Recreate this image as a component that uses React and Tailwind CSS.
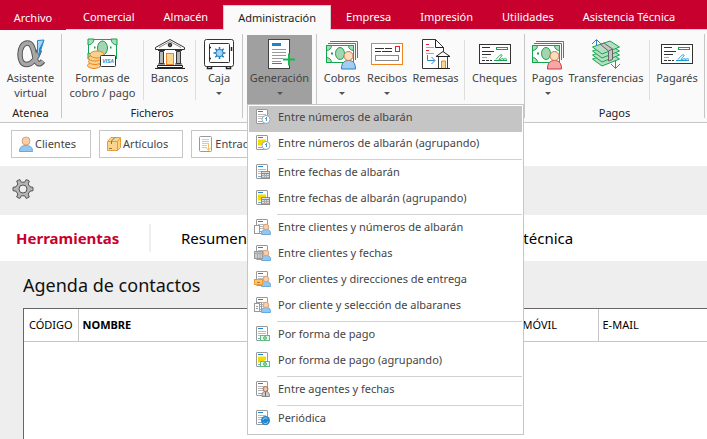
import { useState } from "react";

const tabs = [
  "Comercial",
  "Almacén",
  "Administración",
  "Empresa",
  "Impresión",
  "Utilidades",
  "Asistencia Técnica",
];

const menuGroups = [
  [
    { label: "Entre números de albarán", badge: "clock" },
    { label: "Entre números de albarán (agrupando)", badge: "clock", grouped: true },
  ],
  [
    { label: "Entre fechas de albarán", badge: "calendar" },
    { label: "Entre fechas de albarán (agrupando)", badge: "calendar", grouped: true },
  ],
  [
    { label: "Entre clientes y números de albarán", badge: "client", extra: "page" },
    { label: "Entre clientes y fechas", badge: "client", extra: "calendar" },
    { label: "Por clientes y direcciones de entrega", badge: "client", extra: "address" },
    { label: "Por cliente y selección de albaranes", badge: "client", extra: "pages" },
  ],
  [
    { label: "Por forma de pago", badge: "money" },
    { label: "Por forma de pago (agrupando)", badge: "money", grouped: true },
  ],
  [{ label: "Entre agentes y fechas", badge: "agent" }],
  [{ label: "Periódica", badge: "period" }],
];

function Icon({ children }) {
  return (
    <svg viewBox="0 0 32 32" className="h-8 w-8 shrink-0" fill="none" aria-hidden="true">
      {children}
    </svg>
  );
}

function AlphaIcon() {
  const d = "M24.500 12C22 20 17 26.500 11.500 26.500C7 26.500 5 22 5 16.500C5 10 8 5 12.500 5C18 5 18.500 13 20 19.500C21.500 26 24 28 28 23";
  return (
    <Icon>
      <path d={d} stroke="#555" strokeWidth="5.500" />
      <path d={d} stroke="#a6a6a6" strokeWidth="3.500" />
      <path d="M22.500 2.500L29 2L24 17.500L22.500 14Z" fill="#a9d3f2" stroke="#1b86cf" />
      <path d="M28.500 2.500L24 17L24 11Z" fill="#1b86cf" />
    </Icon>
  );
}

function PaymentIcon() {
  return (
    <Icon>
      <rect x="1.500" y="1.500" width="28" height="19" fill="#fff" stroke="#14a44d" />
      <path d="M1 1h6a6 6 0 0 1-6 6zM30 1h-6a6 6 0 0 0 6 6zM1 21v-6a6 6 0 0 1 6 6z" fill="#a9dcb8" stroke="#14a44d" />
      <ellipse cx="15.500" cy="10" rx="5" ry="7" fill="#a4d4b0" stroke="#14a44d" />
      <path d="M7 9.500h1.500M23 9.500h1.500" stroke="#14a44d" strokeWidth="2" />
      <g fill="#f8d28c" stroke="#ec8424">
        <ellipse cx="7" cy="27.500" rx="6.500" ry="3" />
        <ellipse cx="8" cy="23.500" rx="6.500" ry="3" />
        <ellipse cx="8" cy="20" rx="6.500" ry="3" />
        <ellipse cx="10" cy="16.500" rx="7" ry="3.500" />
      </g>
      <rect x="13.500" y="17.500" width="15" height="11" rx="1" fill="#fff" stroke="#333" />
      <text x="21" y="25" textAnchor="middle" fontSize="5" fontWeight="700" fontStyle="italic" fill="#1b86cf" className="font-['Liberation_Sans',sans-serif]">VISA</text>
    </Icon>
  );
}

function BankIcon() {
  return (
    <Icon>
      <rect x="6" y="11" width="20" height="16" fill="#fff" />
      <path d="M1.500 9.500L16 1.500L30.500 9.500V11.500H1.500Z" fill="#fff" stroke="#333" />
      <path d="M5 9.500L16 3.500L27 9.500" stroke="#888" />
      <circle cx="16" cy="7" r="1.800" fill="#555" stroke="#222" />
      <g fill="#b5b5b5" stroke="#333">
        <path d="M5.500 13.500h4v12h-4zM22.500 13.500h4v12h-4z" />
        <path d="M4 12.500h7M21 12.500h7M4 26h7M21 26h7" />
      </g>
      <rect x="12.500" y="15.500" width="7" height="11" fill="#f9d792" stroke="#ec8424" />
      <path d="M3.500 27.500h25v2h-25zM1 30.500h30" fill="#fff" stroke="#222" />
    </Icon>
  );
}

function SafeIcon() {
  return (
    <Icon>
      <rect x="1.500" y="1.500" width="29" height="27" rx="2" fill="#fff" stroke="#333" />
      <rect x="6.500" y="5.500" width="20" height="19" rx="1" stroke="#333" />
      <path d="M6 9.500h2M6 20.500h2M4.500 28.500v2h4v-2M23.500 28.500v2h4v-2M28.500 9v4" stroke="#222" strokeWidth="1.500" />
      <path d="M16.500 9v12M10.500 15h12M12.300 10.800l8.400 8.400M20.700 10.800l-8.400 8.400" stroke="#1b78ba" strokeWidth="1.500" />
      <circle cx="16.500" cy="15" r="3.700" fill="#9fd3f5" stroke="#1b78ba" />
    </Icon>
  );
}

function GenerateIcon() {
  return (
    <Icon>
      <rect x="4.500" y="1.500" width="21" height="29" fill="#fff" stroke="#444" />
      <path d="M8 6.500h9" stroke="#1b86c4" strokeWidth="3" />
      <path d="M8 11.500h14M8 14.500h14M8 17.500h14M8 20.500h11M8 23.500h9" stroke="#999" />
      <path d="M8 25.500h10" stroke="#1b86c4" />
      <path d="M25 15.500v12M19 21.500h12" stroke="#14b84e" strokeWidth="2" />
    </Icon>
  );
}

function BillsIcon({ person }) {
  const red = person === "red";
  return (
    <Icon>
      <path d="M4 3.500h27.500V20M2 5.500h27.500V22" stroke="#14a44d" />
      <rect x="0.500" y="7.500" width="27" height="17" fill="#fff" stroke="#14a44d" />
      <path d="M0.500 7.500h5a5 5 0 0 1-5 5zM27.500 7.500h-5a5 5 0 0 0 5 5zM0.500 24.500v-5a5 5 0 0 1 5 5z" fill="#a9dcb8" stroke="#14a44d" />
      <ellipse cx="14" cy="15.500" rx="4.500" ry="6" fill="#a4d4b0" stroke="#14a44d" />
      <path d="M5 15.500h2" stroke="#14a44d" strokeWidth="2" />
      <path
        d="M15.500 31C15.500 25 18 22.500 22.500 22.500C27 22.500 29.500 25 29.500 31Z"
        fill={red ? "#f5a8a8" : "#a3cdf0"}
        stroke={red ? "#d9303a" : "#2b7fc0"}
      />
      <circle cx="22.500" cy="18" r="4.500" fill="#fbdcbc" stroke="#c57a4a" />
    </Icon>
  );
}

function ReceiptIcon() {
  return (
    <Icon>
      <rect x="0.500" y="5.500" width="31" height="21" fill="#fff" stroke="#ec8424" />
      <path d="M4 10.500h9M14 10.500h7M4 13.500h6M11 13.500h10" stroke="#333" />
      <rect x="24.500" y="8.500" width="4" height="5" stroke="#e5202e" />
      <rect x="4.500" y="17.500" width="23" height="5" stroke="#888" />
    </Icon>
  );
}

function RemittanceIcon() {
  return (
    <Icon>
      <path d="M18 30.500H2.500V1.500H15.500L23.500 9.500V14" fill="#fff" stroke="#333" />
      <path d="M15.500 1.500V9.500H23.500" stroke="#222" />
      <path d="M6 6.500h3M6 12.500h3" stroke="#e5202e" />
      <path d="M6 9.500h8M6 15.500h8" stroke="#aaa" />
      <path d="M7.500 17v5.500h7M11.500 19l3.500 3.500l-3.500 3.500" stroke="#2a86cc" />
      <path d="M16 18.500L23 13.500L30 18.500Z" fill="#fff" stroke="#222" />
      <path d="M18.500 19v11.500h9V19" fill="#fff" stroke="#444" />
      <path d="M21.500 30v-7h4v7" fill="#f9d792" stroke="#ec8424" />
      <path d="M16 30.500h14" stroke="#222" />
    </Icon>
  );
}

function ChequeIcon({ blue }) {
  const ink = blue ? "#1b9ad8" : "#14a44d";
  return (
    <Icon>
      <rect x="0.500" y="6.500" width="31" height="19" fill="#fff" stroke="#333" />
      <path d="M3 9.500h8M3 13.500h12M3 16.500h9M3 22.500h3M7 22.500h3M11 22.500h2" stroke="#333" />
      <path d="M3 19.500h5" stroke="#aaa" />
      <rect x="17.500" y="9.500" width="11" height="2" stroke="#14a44d" />
      <path d="M15 22.500h13M17 21.500c3-4 6-6 6-4c0 1-5 5-2 4c2-.500 3-2 3 0c2-1 3-1 4 0" stroke={ink} />
    </Icon>
  );
}

function TransferIcon() {
  return (
    <Icon>
      <path d="M6.500 13V2M2 6l4.500-4.500L11 6M25.500 19v11M21 26l4.500 4.500L30 26" stroke="#2a86cc" />
      {[15, 11, 7, 3].map((y) => (
        <path
          key={y}
          d={`M2.500 ${y + 6}L20 ${y}L29.500 ${y + 6}L12 ${y + 13}Z`}
          fill="#b4dfc1"
          stroke="#14a44d"
        />
      ))}
      <path d="M10.500 6.500L14 5L22.500 11V21.500L18.500 23V13Z" fill="#c4c4c4" stroke="#666" />
      <path d="M18.500 13L22.500 11" stroke="#666" />
    </Icon>
  );
}

function MenuIcon({ badge, grouped, extra }) {
  return (
    <svg viewBox="0 0 18 16" className="h-4 w-[18px] shrink-0" fill="none" aria-hidden="true">
      <rect x="2.500" y="0.500" width="11" height="14" rx="0.500" fill="#fff" stroke="#999" />
      <path d="M4 2.500h5" stroke="#2a86cc" />
      <path
        d="M4 5.500h8M4 7.500h8M4 9.500h6"
        stroke={grouped ? "#f2dc00" : "#bbb"}
        strokeWidth={grouped ? 2 : 1}
      />
      <path d="M4 12.500h4" stroke="#74aeda" />
      {badge === "clock" && (
        <>
          <circle cx="12" cy="10.500" r="4" fill="#fff" stroke="#9aa8b3" />
          <path d="M12.500 8v4M11 9.500h1.500" stroke="#4d9ad0" />
        </>
      )}
      {badge === "calendar" && (
        <>
          <rect x="7.500" y="7.500" width="8" height="7" fill="#ddd" stroke="#8c8c8c" />
          <path d="M8 9.500h7" stroke="#8c8c8c" />
          <path d="M8 11.500h7M8 13.500h7M10.500 10v4M12.500 10v4" stroke="#aaa" />
        </>
      )}
      {badge === "client" && (
        <>
          <path d="M7.500 15.500c0-4 1-5 4.500-5s4.500 1 4.500 5z" fill="#94c6ee" stroke="#6aa9da" />
          <circle cx="12" cy="8" r="2.800" fill="#f8cfaa" stroke="#d9a27a" />
        </>
      )}
      {(extra === "page" || extra === "pages") && (
        <rect x="0.500" y="6.500" width="5" height="8" fill="#fff" stroke="#999" />
      )}
      {extra === "pages" && <path d="M2.500 5.500h5v8M2 9.500h2M2 11.500h2" stroke="#999" />}
      {extra === "calendar" && (
        <>
          <rect x="0.500" y="6.500" width="8" height="7" fill="#ccc" stroke="#999" />
          <path d="M1 8.500h7M3.500 7v6M6 7v6" stroke="#aaa" />
        </>
      )}
      {extra === "address" && (
        <>
          <rect x="0.500" y="8.500" width="8" height="5" fill="#f9c66c" stroke="#ec9a3a" />
          <path d="M3 11.500h3" stroke="#b9742c" />
        </>
      )}
      {badge === "money" && (
        <>
          <rect x="6.500" y="9.500" width="9" height="5" fill="#e6f7eb" stroke="#5fbd80" />
          <circle cx="11" cy="12" r="1.500" fill="#9dd3ae" stroke="#5fbd80" />
        </>
      )}
      {badge === "agent" && (
        <>
          <path d="M8 15.500c0-4 1-5 3.500-5s4 1 4 5z" fill="#ccc" stroke="#888" />
          <path d="M11.500 11v4" stroke="#dc3a3a" />
          <circle cx="11.500" cy="8" r="2.500" fill="#f4c3a0" stroke="#b06a4c" />
        </>
      )}
      {badge === "period" && (
        <>
          <circle cx="11.500" cy="10.500" r="4.500" fill="#2584c8" />
          <path d="M9 10a2.500 2.500 0 0 1 4.500-1M14 11.500a2.500 2.500 0 0 1-4.500 1" stroke="#9ed4f8" />
        </>
      )}
    </svg>
  );
}

function RibbonButton({ icon, lines, arrow, active, className = "", ...props }) {
  return (
    <button
      type="button"
      className={`flex h-[69px] shrink-0 flex-col items-center pt-[3px] whitespace-nowrap ${active ? "bg-[#a0a0a0]" : ""} ${className}`}
      {...props}
    >
      {icon}
      {lines.map((line) => (
        <span key={line} className="leading-[15px]">{line}</span>
      ))}
      {arrow && (
        <svg viewBox="0 0 6 3" className="mt-[7px] h-[3px] w-[6px]" aria-hidden="true">
          <path d="M0 0h6L3 3z" fill="#555" />
        </svg>
      )}
    </button>
  );
}

function RibbonGroup({ label, className = "", children }) {
  return (
    <>
      <section aria-label={label} className={`flex shrink-0 flex-col pt-[5px] ${className}`}>
        <div className="flex">{children}</div>
        {label && <div className="text-center leading-[18px] text-[#222]">{label}</div>}
      </section>
      <div className="my-1 w-px shrink-0 bg-[#c6c6c6]" />
    </>
  );
}

function Divider() {
  return <div className="mt-[5px] mb-1 w-px shrink-0 bg-[#dedede]" />;
}

function GenerationMenu({ onSelect }) {
  const [current, setCurrent] = useState(menuGroups[0][0].label);

  return (
    <div role="menu" className="absolute top-full left-0 z-20 w-[277px] border border-[#c6c6c6] bg-white p-px">
      {menuGroups.map((group, index) => (
        <div key={group[0].label}>
          {index > 0 && <div className="my-px ml-7 h-px bg-[#d2d2d2]" />}
          {group.map((item) => (
            <button
              key={item.label}
              type="button"
              role="menuitem"
              onMouseEnter={() => setCurrent(item.label)}
              onClick={onSelect}
              className={`flex h-[26px] w-full items-center gap-[6px] pb-1 pl-[5px] text-left whitespace-nowrap ${current === item.label ? "bg-[#c5c5c5]" : ""}`}
            >
              <MenuIcon badge={item.badge} grouped={item.grouped} extra={item.extra} />
              {item.label}
            </button>
          ))}
        </div>
      ))}
    </div>
  );
}

function Ribbon() {
  const [open, setOpen] = useState(true);

  return (
    <div className="flex h-[93px] border-b border-[#c6c6c6] bg-[#fafafa] text-[#444]">
      <RibbonGroup label="Atenea">
        <RibbonButton className="w-[61px]" icon={<AlphaIcon />} lines={["Asistente", "virtual"]} />
      </RibbonGroup>
      <RibbonGroup label="Ficheros">
        <RibbonButton className="w-[81px]" icon={<PaymentIcon />} lines={["Formas de", "cobro / pago"]} />
        <Divider />
        <RibbonButton className="w-[51px]" icon={<BankIcon />} lines={["Bancos"]} />
        <Divider />
        <RibbonButton className="w-[46px]" icon={<SafeIcon />} lines={["Caja"]} arrow />
      </RibbonGroup>
      <RibbonGroup className="px-1">
        <div className="relative">
          <RibbonButton
            className="w-[65px]"
            icon={<GenerateIcon />}
            lines={["Generación"]}
            arrow
            active={open}
            aria-expanded={open}
            onClick={() => setOpen(!open)}
          />
          {open && <GenerationMenu onSelect={() => setOpen(false)} />}
        </div>
      </RibbonGroup>
      <RibbonGroup>
        <RibbonButton className="ml-[2px] w-[46px]" icon={<BillsIcon />} lines={["Cobros"]} arrow />
        <RibbonButton className="w-[44px]" icon={<ReceiptIcon />} lines={["Recibos"]} arrow />
        <RibbonButton className="mr-[2px] w-[53px]" icon={<RemittanceIcon />} lines={["Remesas"]} />
        <Divider />
        <RibbonButton className="w-[59px]" icon={<ChequeIcon />} lines={["Cheques"]} />
      </RibbonGroup>
      <RibbonGroup label="Pagos">
        <RibbonButton className="ml-[3px] w-[39px]" icon={<BillsIcon person="red" />} lines={["Pagos"]} arrow />
        <RibbonButton className="mr-1 w-[78px]" icon={<TransferIcon />} lines={["Transferencias"]} />
        <Divider />
        <RibbonButton className="w-[54px]" icon={<ChequeIcon blue />} lines={["Pagarés"]} />
      </RibbonGroup>
    </div>
  );
}

function Shortcut({ label, children }) {
  return (
    <button type="button" className="flex h-7 items-center gap-px border border-[#c6c6c6] bg-white pr-3.5 pl-[6px] whitespace-nowrap">
      <svg viewBox="0 0 16 16" className="h-4 w-4 shrink-0" fill="none" aria-hidden="true">
        {children}
      </svg>
      {label}
    </button>
  );
}

function Shortcuts() {
  return (
    <div className="flex h-[43px] gap-2 pt-[7px] pl-[11px] text-[#444]">
      <Shortcut label="Clientes">
        <path d="M1.500 15.500C1.500 11 4 9.500 8 9.500S14.500 11 14.500 15.500Z" fill="#94c6ee" stroke="#6aa9da" />
        <circle cx="8" cy="5" r="4" fill="#f8cfaa" stroke="#d9a27a" />
      </Shortcut>
      <Shortcut label="Artículos">
        <path d="M1.500 5.500L5 1.500H14.500V11.500L11.500 14.500H1.500Z" fill="#fbd48c" stroke="#ec9a3a" />
        <path d="M1.500 5.500H11.500V14.500M11.500 5.500L14.500 1.500" stroke="#ec9a3a" />
        <path d="M5.500 8V5L9 1.500" stroke="#777" />
        <path d="M3 12.500h3" stroke="#777" />
      </Shortcut>
      <Shortcut label="Entradas">
        <rect x="1.500" y="0.500" width="12" height="15" rx="1" fill="#fff" stroke="#999" />
        <path d="M4 3.500h7M4 7.500h7M4 9.500h5M4 11.500h5" stroke="#ccc" />
        <path d="M4 5.500h7M10.500 8v6M8 11.500l2.500 3l2.500-3" stroke="#f3c26b" />
      </Shortcut>
    </div>
  );
}

function Gear() {
  return (
    <svg viewBox="0 0 22 22" className="h-[22px] w-[22px]" fill="none" aria-hidden="true">
      <path
        d="M9.300 4.200L7.800 1.500L4.700 3L5.800 6L4 8.800L1 9.300V12.700L4 13.200L5.800 16L4.700 19L7.800 20.500L9.300 17.800H12.700L14.200 20.500L17.300 19L16.200 16L18 13.200L21 12.700V9.300L18 8.800L16.200 6L17.300 3L14.200 1.500L12.700 4.200Z"
        fill="#b5b5b5"
        stroke="#555"
        strokeLinejoin="round"
      />
      <circle cx="11" cy="11" r="4" fill="#eee" stroke="#555" />
    </svg>
  );
}

export default function App() {
  return (
    <div className="flex min-h-screen flex-col overflow-x-hidden bg-white font-['Noto_Sans','Open_Sans',sans-serif] text-[11px] text-[#222]">
      <header className="flex h-[30px] bg-[#c8002d] text-white">
        <button type="button" className="w-[66px] shrink-0 pt-[7px]">Archivo</button>
        <nav className="flex grow items-end gap-px border-b border-[#d8d8d8] pt-[5px] pl-[3px]">
          {tabs.map((tab) => (
            <button
              key={tab}
              type="button"
              className={
                tab === "Administración"
                  ? "-mb-px h-[25px] shrink-0 border border-b-0 border-[#d0d0d0] bg-[#fafafa] px-[14px] text-[#222]"
                  : "h-6 shrink-0 px-[14px]"
              }
            >
              {tab}
            </button>
          ))}
        </nav>
      </header>
      <Ribbon />
      <Shortcuts />
      <div className="flex h-[49px] shrink-0 items-center bg-[#eee] pb-1 pl-3">
        <button type="button" aria-label="Configuración">
          <Gear />
        </button>
      </div>
      <nav className="flex h-[46px] shrink-0 items-center pl-4 text-[15px] whitespace-nowrap text-black">
        <a href="#herramientas" className="w-[133px] font-bold text-[#c8002d]">Herramientas</a>
        <span className="mr-[30px] h-7 w-[2px] bg-[#eee]" />
        <a href="#resumen" className="w-[268px]">Resumen</a>
        <a href="#asistencia">Asistencia técnica</a>
      </nav>
      <main className="flex grow flex-col bg-[#eee] pt-[11px] pl-[23px]">
        <h1 className="text-[18px] leading-[26px] text-[#111]">Agenda de contactos</h1>
        <div className="mt-[10px] grow border-t border-l border-[#666] bg-white">
          <table className="w-full table-fixed border-collapse text-left text-black">
            <thead>
              <tr className="h-8 border-b border-[#c6c6c6]">
                <th className="w-[54px] border-r border-[#c6c6c6] pl-[5px] font-normal">CÓDIGO</th>
                <th className="w-[360px] border-r border-[#c6c6c6] pl-1 font-bold">NOMBRE</th>
                <th className="w-[80px] border-r border-[#c6c6c6] pl-1 font-normal">TELÉFONO</th>
                <th className="w-[80px] border-r border-[#c6c6c6] pl-1 font-normal">MÓVIL</th>
                <th className="pl-1 font-normal">E-MAIL</th>
              </tr>
            </thead>
          </table>
        </div>
      </main>
    </div>
  );
}
